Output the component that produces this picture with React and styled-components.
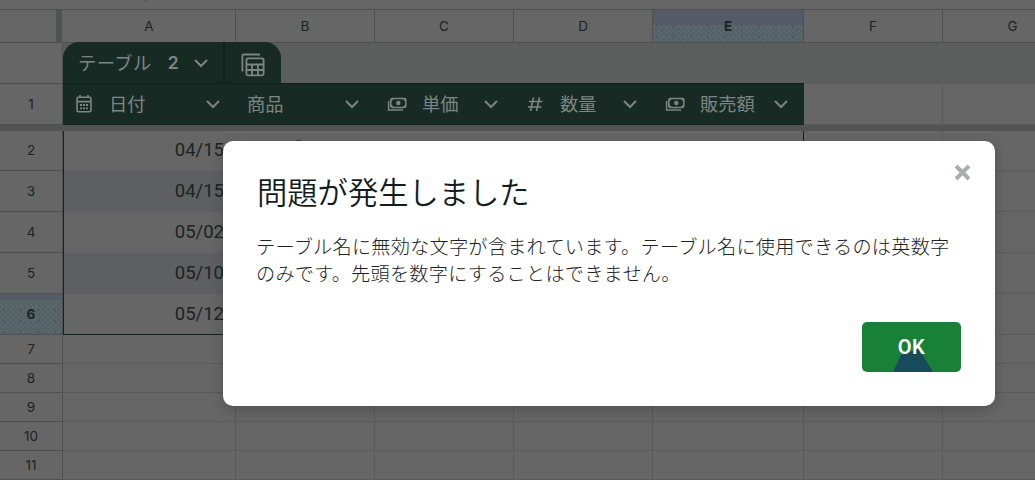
import React from "react";
import styled, { createGlobalStyle } from "styled-components";

const GlobalStyle = createGlobalStyle`
    * { box-sizing: border-box; }
    body { margin: 0; background: #666; }
`

const Page = styled.div`
    position: relative;
    width: 1035px;
    height: 480px;
    overflow: hidden;
    background: #666;
    color: #1b2423;
    font-family: Inter, "Noto Sans CJK JP", sans-serif;
`

const TopStrip = styled.div`
    height: 10px;
    padding-left: 145px;
    border-bottom: 1px solid #4f5151;
`

const StripMark = styled.div`
    width: 1px;
    height: 2px;
    background: #484a4a;
`

const Row = styled.div`
    display: grid;
    grid-template-columns: 63px 173px 139px 139px 139px 151px 139px 140px;
    height: ${props => props.$height}px;
`

// the selected header is flat blue down to $flat, then speckled
const dither = flat => `
    linear-gradient(#545b67 0, #545b67 ${flat}, transparent ${flat}),
    radial-gradient(circle at 1px 1px, #3a5560 0.6px, transparent 0.9px) 3px 4px / 17px 11px,
    radial-gradient(circle at 1px 1px, #667172 0.6px, transparent 0.8px) 0 0 / 5px 5px,
    radial-gradient(circle at 1px 1px, #667172 0.6px, transparent 0.8px) 2px 2px / 5px 5px,
    linear-gradient(#566462, #546166 60%)
`

const HeadCell = styled.div`
    display: flex;
    align-items: center;
    justify-content: center;
    font-size: 13.5px;
    font-weight: ${props => props.$active ? 700 : 400};
    border-right: 1px solid #4f5151;
    border-bottom: 1px solid #4f5151;
    background: ${props => props.$active ? dither(props.$flat) : "#666"};
`

const Corner = styled(HeadCell)`
    border-right: 6px solid #505352;
    margin-right: 1px;
`

const NumberCell = styled(HeadCell)`
    padding-bottom: ${props => props.$raised ? 2 : 0}px;
`

const Cell = styled.div`
    border-right: 1px solid #595b5b;
    border-bottom: 1px solid #595b5b;
`

const DateCell = styled.div`
    display: flex;
    align-items: center;
    justify-content: flex-end;
    padding: 0 12px ${props => props.$last ? 0 : 2}px 0;
    border-left: 1px solid #10271f;
    border-bottom: ${props => props.$last ? "1px solid #10271f" : "none"};
    background: ${props => props.$band ? "#5e5f63" : "#666"};
    font: 18.5px Roboto, sans-serif;
`

const TableEnd = styled(Cell)`
    border-right-color: #10271f;
`

const NameRow = styled.div`
    display: flex;
    height: 41px;
    background: #5c5e5d;
`

const NameGutter = styled.div`
    width: 63px;
    background: #666;
    border-right: 1px solid #4f5151;
    border-bottom: 1px solid #4f5151;
`

const TableTab = styled.div`
    display: flex;
    width: 218px;
    margin-top: -1px;
    border-radius: 16px 16px 0 0;
    background: #172b24;
    border-bottom: 1px solid #10201a;
    color: #7d8582;
`

const TabName = styled.div`
    display: flex;
    align-items: center;
    width: 162px;
    padding: 0 14px 0 15px;
    border-right: 2px solid #10201a;
    font: 18.3px "Noto Sans CJK JP", sans-serif;
`

const TabText = styled.span`
    margin-top: -2px;
    letter-spacing: 0.4px;
`

const TabNumber = styled.span`
    margin: 0 auto 0 16px;
    font: 600 17.5px Inter, sans-serif;
`

const TabIcon = styled.div`
    padding: 11px 0 0 16px;
`

const FieldCell = styled.div`
    display: flex;
    align-items: center;
    gap: ${props => props.$gap || 13}px;
    margin-top: -1px;
    padding: 0 15px 0 ${props => props.$gap ? 12 : 11}px;
    background: #172b24;
    border-top: 1px solid #10201a;
    border-bottom: 1px solid #10201a;
    color: #7d8582;
    font: 18.3px "Noto Sans CJK JP", sans-serif;

    svg:last-child {
        margin-left: auto;
    }
`

const FieldName = styled.span`
    margin-top: -3px;
`

const FrozenBar = styled.div`
    height: 6px;
    background: #515453;
`

const ChipEdge = styled.div`
    width: 6px;
    height: 2px;
    margin: 9px 0 0 60px;
    background: #1d4a5a;
`

const Dialog = styled.section`
    position: absolute;
    left: 223px;
    top: 141px;
    width: 772px;
    height: 265px;
    padding: 30px 34px 34px;
    display: flex;
    flex-direction: column;
    border-radius: 10px;
    background: #fff;
    box-shadow: 0 4px 14px rgba(0, 0, 0, 0.2);
    font-family: "Noto Sans CJK JP", sans-serif;
`

const Title = styled.h1`
    margin: 0;
    font-size: 30.3px;
    font-weight: 350;
    line-height: 40px;
    color: #121c20;
`

const Message = styled.p`
    margin: 22px -8px 0 -1px;
    font-size: 19.2px;
    font-weight: 300;
    letter-spacing: 0.22px;
    line-height: 27px;
    color: #1c2426;
`

const CloseButton = styled.button`
    position: absolute;
    right: 24px;
    top: 23px;
    width: 17px;
    height: 17px;
    padding: 0;
    border: 0;
    background: none;
    line-height: 0;
`

const OkButton = styled.button`
    position: relative;
    align-self: flex-end;
    width: 99px;
    height: 50px;
    margin-top: auto;
    padding: 0;
    border: 0;
    border-radius: 5px;
    overflow: hidden;
    background: #198038;
    color: #fff;
    font: 600 20px Roboto, sans-serif;
    letter-spacing: 0.4px;
`

const Pointer = styled.svg`
    position: absolute;
    left: 31px;
    bottom: 0;
`

const OkLabel = styled.span`
    position: relative;
`

function Chevron() {
    return (
        <svg width="16" height="10" viewBox="0 0 16 10" fill="none" stroke="#7d8582" strokeWidth="2">
            <path d="M2 2l6 6 6-6" />
        </svg>
    )
}

function CalendarIcon() {
    return (
        <svg width="18" height="20" viewBox="0 0 18 20" fill="none" stroke="#7d8582" strokeWidth="1.6">
            <rect x="2" y="3.3" width="14" height="14.5" rx="1.6" />
            <path d="M2 7.6h14M5 1v2.5M13 1v2.5" />
            <path d="M5 11h2M8 11h2M11 11h2M5 14.3h2M8 14.3h2M11 14.3h2" strokeWidth="1.8" />
        </svg>
    )
}

function MoneyIcon() {
    return (
        <svg width="20" height="16" viewBox="0 0 20 16" fill="none" stroke="#7d8582" strokeWidth="1.5">
            <rect x="3.8" y="2.5" width="15" height="9" rx="1.4" />
            <path d="M1.6 5v9H16" />
            <circle cx="11.3" cy="7" r="2.2" fill="#7d8582" stroke="none" />
            <path d="M4 5l2-2.300M18.600 5l-2-2.300M4 9l2 2.300M18.600 9l-2 2.300" strokeWidth="1.2" />
        </svg>
    )
}

function HashIcon() {
    return (
        <svg width="18" height="18" viewBox="0 0 18 18" fill="none" stroke="#7d8582" strokeWidth="1.6">
            <path d="M7.500 2.500L4.500 16M13.500 2.500l-3 13.500M3 6.500h13.500M2 12h13.500" />
        </svg>
    )
}

function TableIcon() {
    return (
        <svg width="24" height="24" viewBox="0 0 24 24" fill="none" stroke="#7d8582" strokeWidth="1.8">
            <path d="M1.400 18.500V2.500q0-1 1-1H19" />
            <rect x="5.400" y="5.400" width="17.200" height="17" rx="1.800" />
            <path d="M5.400 11.500h17.200M5.400 17h17.200M11 11.500v11M17 11.500v11" />
        </svg>
    )
}

const columns = ["A", "B", "C", "D", "E", "F", "G"]
const dates = ["04/15", "04/15", "05/02", "05/10", "05/12"]
const emptyRows = [7, 8, 9, 10, 11]

const fields = [
    { name: "日付", icon: <CalendarIcon />, gap: 16 },
    { name: "商品" },
    { name: "単価", icon: <MoneyIcon />, gap: 15 },
    { name: "数量", icon: <HashIcon />, gap: 16 },
    { name: "販売額", icon: <MoneyIcon />, gap: 15 },
]

function Sheet() {
    return (
        <div>
            <TopStrip><StripMark /></TopStrip>
            <Row $height={33}>
                <Corner />
                {columns.map(name => (
                    <HeadCell key={name} $active={name === "E"} $flat="48%">{name}</HeadCell>
                ))}
            </Row>
            <NameRow>
                <NameGutter />
                <TableTab>
                    <TabName>
                        <TabText>テーブル</TabText>
                        <TabNumber>2</TabNumber>
                        <Chevron />
                    </TabName>
                    <TabIcon><TableIcon /></TabIcon>
                </TableTab>
            </NameRow>
            <Row $height={41}>
                <NumberCell>1</NumberCell>
                {fields.map(field => (
                    <FieldCell key={field.name} $gap={field.gap}>
                        {field.icon}
                        <FieldName>{field.name}</FieldName>
                        <Chevron />
                    </FieldCell>
                ))}
                <Cell />
                <Cell />
            </Row>
            <FrozenBar />
            {dates.map((date, i) => (
                <Row key={i} $height={i === 0 ? 40 : 41}>
                    <NumberCell $active={i === 4} $flat="16%" $raised={i === 0}>{i + 2}</NumberCell>
                    <DateCell $band={i % 2 === 1} $last={i === 4}>{date}</DateCell>
                    <div>{i === 0 && <ChipEdge />}</div>
                    <div />
                    <div />
                    <TableEnd />
                    <Cell />
                    <Cell />
                </Row>
            ))}
            {emptyRows.map(number => (
                <Row key={number} $height={29}>
                    <NumberCell>{number}</NumberCell>
                    {columns.map(name => <Cell key={name} />)}
                </Row>
            ))}
        </div>
    )
}

function App() {
    return (
        <Page>
            <GlobalStyle />
            <Sheet />
            <Dialog>
                <Title>問題が発生しました</Title>
                <Message>
                    テーブル名に無効な文字が含まれています。テーブル名に使用できるのは英数字<br />
                    のみです。先頭を数字にすることはできません。
                </Message>
                <CloseButton aria-label="閉じる">
                    <svg width="17" height="17" viewBox="0 0 17 17" stroke="#a9adad" strokeWidth="4">
                        <path d="M2 2l13 13M15 2L2 15" />
                    </svg>
                </CloseButton>
                <OkButton>
                    <Pointer width="40" height="23" viewBox="0 0 40 23">
                        <path d="M0 23L8 6l17-6 4 5 11 18z" fill="#174a5b" />
                    </Pointer>
                    <OkLabel>OK</OkLabel>
                </OkButton>
            </Dialog>
        </Page>
    )
}

export default App;
